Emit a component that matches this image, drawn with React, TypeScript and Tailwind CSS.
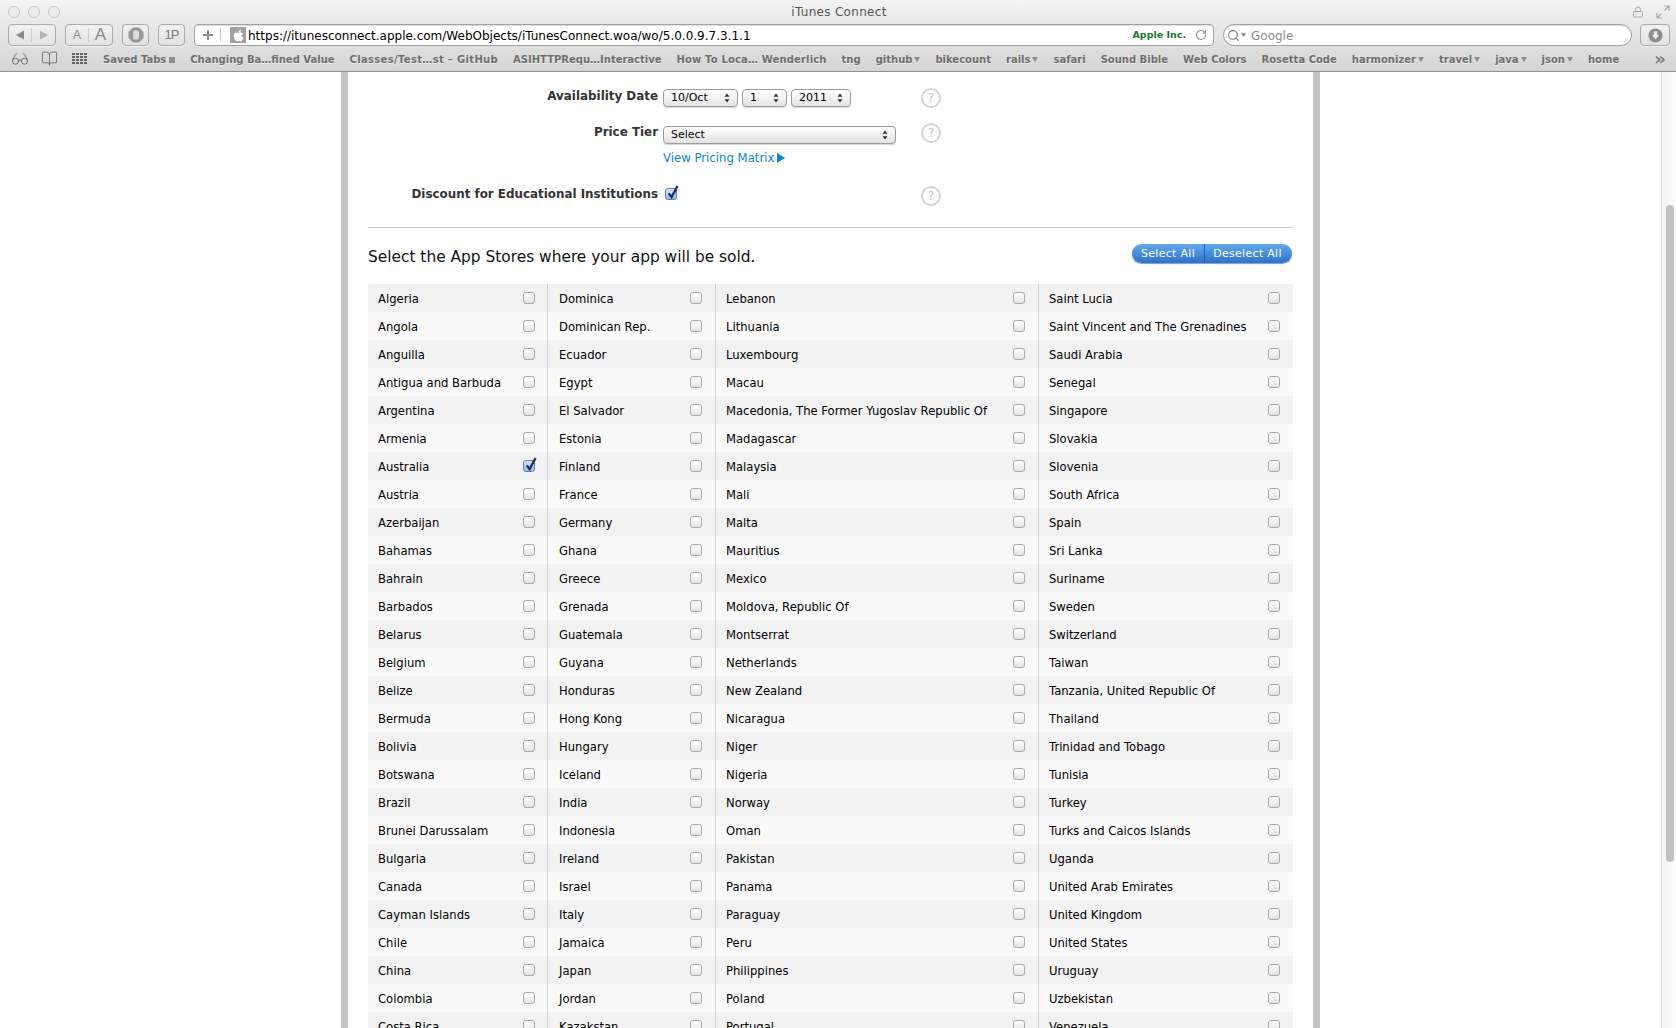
import { BookOpen, Glasses, Lock, RotateCw, Search } from 'lucide-react';
import { FaApple } from 'react-icons/fa';

const columns = [
  ['Algeria', 'Angola', 'Anguilla', 'Antigua and Barbuda', 'Argentina', 'Armenia', 'Australia', 'Austria', 'Azerbaijan', 'Bahamas', 'Bahrain', 'Barbados', 'Belarus', 'Belgium', 'Belize', 'Bermuda', 'Bolivia', 'Botswana', 'Brazil', 'Brunei Darussalam', 'Bulgaria', 'Canada', 'Cayman Islands', 'Chile', 'China', 'Colombia', 'Costa Rica'],
  ['Dominica', 'Dominican Rep.', 'Ecuador', 'Egypt', 'El Salvador', 'Estonia', 'Finland', 'France', 'Germany', 'Ghana', 'Greece', 'Grenada', 'Guatemala', 'Guyana', 'Honduras', 'Hong Kong', 'Hungary', 'Iceland', 'India', 'Indonesia', 'Ireland', 'Israel', 'Italy', 'Jamaica', 'Japan', 'Jordan', 'Kazakstan'],
  ['Lebanon', 'Lithuania', 'Luxembourg', 'Macau', 'Macedonia, The Former Yugoslav Republic Of', 'Madagascar', 'Malaysia', 'Mali', 'Malta', 'Mauritius', 'Mexico', 'Moldova, Republic Of', 'Montserrat', 'Netherlands', 'New Zealand', 'Nicaragua', 'Niger', 'Nigeria', 'Norway', 'Oman', 'Pakistan', 'Panama', 'Paraguay', 'Peru', 'Philippines', 'Poland', 'Portugal'],
  ['Saint Lucia', 'Saint Vincent and The Grenadines', 'Saudi Arabia', 'Senegal', 'Singapore', 'Slovakia', 'Slovenia', 'South Africa', 'Spain', 'Sri Lanka', 'Suriname', 'Sweden', 'Switzerland', 'Taiwan', 'Tanzania, United Republic Of', 'Thailand', 'Trinidad and Tobago', 'Tunisia', 'Turkey', 'Turks and Caicos Islands', 'Uganda', 'United Arab Emirates', 'United Kingdom', 'United States', 'Uruguay', 'Uzbekistan', 'Venezuela'],
];

// width of each cell, the fourth column has no right border
const cellClasses = [
  'w-[180px] pl-[10px] pr-[12px] border-r border-[#d2d2d2]',
  'w-[168px] pl-[11px] pr-[13px] border-r border-[#d2d2d2]',
  'w-[323px] pl-[10px] pr-[13px] border-r border-[#d2d2d2]',
  'w-[254px] pl-[10px] pr-[13px]',
];

const bookmarks = [
  { label: 'Saved Tabs', square: true },
  { label: 'Changing Ba…fined Value' },
  { label: 'Classes/Test…st – GitHub', track: 'tracking-[0.33px]' },
  { label: 'ASIHTTPRequ…Interactive' },
  { label: 'How To Loca… Wenderlich', track: 'tracking-[0.15px]' },
  { label: 'tng' },
  { label: 'github', menu: true },
  { label: 'bikecount' },
  { label: 'rails', menu: true },
  { label: 'safari' },
  { label: 'Sound Bible' },
  { label: 'Web Colors' },
  { label: 'Rosetta Code' },
  { label: 'harmonizer', menu: true },
  { label: 'travel', menu: true },
  { label: 'java', menu: true },
  { label: 'json', menu: true },
  { label: 'home' },
];

const Checkbox = ({ checked = false }: { checked?: boolean }) => (
  <span className={`relative block w-[12px] h-[12px] shrink-0 rounded-[3px] border ${checked ? 'border-[#5f7fb0] bg-gradient-to-b from-[#d6e4f6] to-[#9dbde8]' : 'border-[#a9a9a9] bg-gradient-to-b from-[#ffffff] to-[#e4e4e4]'}`}>
    {checked && (
      <svg viewBox="0 0 14 16" className="absolute left-[0px] top-[-4px] w-[13px] h-[15px]">
        <path d="M3 9 L6 13 L12.5 1" fill="none" stroke="#14305c" strokeWidth="2.4" />
      </svg>
    )}
  </span>
);

const SelectBox = ({ label, className }: { label: string; className: string }) => (
  <div className={`flex items-center justify-between h-[18px] pl-[7px] pr-[7px] rounded-[4px] border border-[#9b9b9b] bg-gradient-to-b from-[#ffffff] to-[#e3e3e3] shadow-[0_1px_0_#d8d8d8] text-[11px] leading-[16px] text-black ${className}`}>
    <span>{label}</span>
    <svg viewBox="0 0 6 10" className="w-[6px] h-[10px]">
      <path d="M3 0.5 L5.5 3.8 H0.5 Z M3 9.5 L5.5 6.2 H0.5 Z" fill="#333" />
    </svg>
  </div>
);

const HelpIcon = ({ className = '' }: { className?: string }) => (
  <span className={`flex items-center justify-center w-[20px] h-[20px] rounded-full border-2 border-[#d4d4d4] text-[12px] leading-none text-[#c4c4c4] ${className}`}>?</span>
);

const ToolButton = ({ children, className = '' }: { children: React.ReactNode; className?: string }) => (
  <div className={`flex items-center justify-center h-[22px] rounded-[4px] border border-[#ababab] bg-gradient-to-b from-[#f2f2f2] to-[#e2e2e2] shadow-[0_1px_0_#f4f4f4] ${className}`}>
    {children}
  </div>
);

const BrowserChrome = () => (
  <header className="shrink-0 h-[72px] border-b border-[#929292] bg-gradient-to-b from-[#f3f3f3] to-[#d5d5d5]">
    {/* title bar */}
    <div className="flex items-center h-[24px] pl-[8px] pr-[6px]">
      <div className="flex gap-[8px] w-[54px]">
        <span className="w-[12px] h-[12px] rounded-full border border-[#c6c6c6] bg-[#ececec]" />
        <span className="w-[12px] h-[12px] rounded-full border border-[#c6c6c6] bg-[#ececec]" />
        <span className="w-[12px] h-[12px] rounded-full border border-[#c6c6c6] bg-[#ececec]" />
      </div>
      <div className="flex-1 text-center text-[12px] tracking-[0.3px] text-[#555]">iTunes Connect</div>
      <div className="flex items-center justify-end w-[54px] gap-[12px]">
        <Lock size={12} strokeWidth={2} className="text-[#a8a8a8]" />
        <svg viewBox="0 0 14 14" className="w-[14px] h-[14px] text-[#a8a8a8]">
          <path d="M8 1 H13 V6 M13 1 L8.5 5.5 M6 13 H1 V8 M1 13 L5.5 8.5" fill="none" stroke="currentColor" strokeWidth="1.2" />
        </svg>
      </div>
    </div>

    {/* navigation row */}
    <div className="flex items-center h-[22px] pl-[8px] pr-[6px]">
      <ToolButton className="w-[48px] divide-x divide-[#cccccc]">
        <span className="flex items-center justify-center w-1/2 h-[14px]">
          <svg viewBox="0 0 10 10" className="w-[10px] h-[10px]"><path d="M1 5 L9 0.5 V9.5 Z" fill="#8a8a8a" /></svg>
        </span>
        <span className="flex items-center justify-center w-1/2 h-[14px]">
          <svg viewBox="0 0 10 10" className="w-[10px] h-[10px]"><path d="M9 5 L1 0.5 V9.5 Z" fill="#b4b4b4" /></svg>
        </span>
      </ToolButton>
      <ToolButton className="w-[48px] ml-[9px] divide-x divide-[#cccccc] text-[#8a8a8a] font-['Liberation_Sans',sans-serif]">
        <span className="flex items-center justify-center w-1/2 h-[14px] text-[12px]">A</span>
        <span className="flex items-center justify-center w-1/2 h-[14px] text-[17px]">A</span>
      </ToolButton>
      <ToolButton className="w-[27px] ml-[9px]">
        <svg viewBox="0 0 16 16" className="w-[16px] h-[16px]">
          <path d="M5 0.5 H11 L15.5 5 V11 L11 15.5 H5 L0.5 11 V5 Z" fill="#999999" />
          <path d="M5.2 12.5 V5 Q5.2 4 6 4 V3.4 Q7 2.6 8 3.4 Q9.2 2.8 10 4 Q11 4 11 5 V10 Q11 12.5 9 12.5 Z" fill="#dddddd" />
        </svg>
      </ToolButton>
      <ToolButton className="w-[27px] ml-[9px] text-[13px] text-[#7a7a7a] font-['Liberation_Sans',sans-serif] tracking-[-1px]">1P</ToolButton>
      <div className="flex items-center w-[1020px] h-[22px] ml-[9px] rounded-[4px] border border-[#a2a2a2] bg-white shadow-[inset_0_1px_1px_#dddddd]">
        <span className="flex items-center justify-center w-[26px] h-[14px] border-r border-[#cfcfcf]">
          <svg viewBox="0 0 12 12" className="w-[12px] h-[12px]"><path d="M6 1 V11 M1 6 H11" stroke="#8d8d8d" strokeWidth="2" /></svg>
        </span>
        <span className="flex items-center justify-center w-[16px] h-[16px] ml-[9px] bg-[#a2a2a2]">
          <FaApple size={13} className="text-white" />
        </span>
        <span className="ml-[2px] pt-[1px] flex-1 text-[12px] leading-[20px] text-black">https://itunesconnect.apple.com/WebObjects/iTunesConnect.woa/wo/5.0.0.9.7.3.1.1</span>
        <span className="text-[9.5px] font-bold text-[#1b7a2b]">Apple Inc.</span>
        <RotateCw size={12} strokeWidth={2.4} className="ml-[9px] mr-[6px] text-[#8f8f8f]" />
      </div>
      <div className="flex items-center w-[409px] h-[22px] ml-[9px] pl-[3px] rounded-full border border-[#a2a2a2] bg-white shadow-[inset_0_1px_1px_#dddddd]">
        <Search size={13} strokeWidth={2} className="text-[#7d7d7d]" />
        <svg viewBox="0 0 6 4" className="w-[5px] h-[4px] ml-[1px]"><path d="M0 0 H6 L3 4 Z" fill="#7d7d7d" /></svg>
        <span className="ml-[5px] pt-[1px] text-[12px] text-[#8a8a8a]">Google</span>
      </div>
      <ToolButton className="w-[30px] ml-[8px]">
        <svg viewBox="0 0 16 16" className="w-[15px] h-[15px]">
          <circle cx="8" cy="8" r="7.5" fill="#8d8d8d" />
          <path d="M6.2 3.5 H9.8 V7.5 H12 L8 12 L4 7.5 H6.2 Z" fill="#ededed" />
        </svg>
      </ToolButton>
    </div>

    {/* bookmarks bar */}
    <div className="flex items-center h-[25px] pl-[11px] pr-[10px] text-[#6e6e6e]">
      <Glasses size={18} strokeWidth={1.2} className="text-[#666]" />
      <BookOpen size={17} strokeWidth={1.2} className="ml-[12px] text-[#666]" />
      <svg viewBox="0 0 15 11" className="ml-[14px] w-[15px] h-[11px] text-[#666]">
        <path d="M0 0h3v2H0zM4 0h3v2H4zM8 0h3v2H8zM12 0h3v2h-3zM0 3h3v2H0zM4 3h3v2H4zM8 3h3v2H8zM12 3h3v2h-3zM0 6h3v2H0zM4 6h3v2H4zM8 6h3v2H8zM12 6h3v2h-3zM0 9h3v2H0zM4 9h3v2H4zM8 9h3v2H8zM12 9h3v2h-3z" fill="currentColor" />
      </svg>
      <div className="flex flex-1 items-center gap-[15px] ml-[16px] pt-[2px] text-[10px] font-bold whitespace-nowrap [text-shadow:0_1px_0_#eeeeee]">
        {bookmarks.map((b) => (
          <span key={b.label} className={`flex items-center gap-[2px] ${b.track ?? ''}`}>
            {b.label}
            {b.square && <span className="w-[6px] h-[6px] ml-[1px] bg-[#8d8d8d]" />}
            {b.menu && (
              <svg viewBox="0 0 6 5" className="w-[6px] h-[5px]"><path d="M0 0 H6 L3 5 Z" fill="#8d8d8d" /></svg>
            )}
          </span>
        ))}
      </div>
      <span className="text-[18px] font-bold leading-none text-[#777]">»</span>
    </div>
  </header>
);

const FormSection = () => (
  <>
    <div className="flex items-start">
      <label className="w-[290px] text-right text-[11.9px] leading-[14px] font-bold text-[#333]">Availability Date</label>
      <div className="flex gap-[4px] w-[258px] ml-[5px]">
        <SelectBox label="10/Oct" className="w-[75px]" />
        <SelectBox label="1" className="w-[45px]" />
        <SelectBox label="2011" className="w-[60px]" />
      </div>
      <HelpIcon className="-mt-px" />
    </div>
    <div className="flex items-start mt-[18px]">
      <label className="w-[290px] -mt-px text-right text-[11.9px] leading-[14px] font-bold text-[#333]">Price Tier</label>
      <div className="w-[258px] ml-[5px]">
        <SelectBox label="Select" className="w-[233px]" />
        <a className="flex items-center gap-[3px] mt-[7px] text-[11.7px] leading-[14px] text-[#0b84cc]">
          View Pricing Matrix
          <svg viewBox="0 0 8 10" className="w-[8px] h-[10px]"><path d="M0 0 L8 5 L0 10 Z" fill="#0b84cc" /></svg>
        </a>
      </div>
      <HelpIcon className="-mt-[3px]" />
    </div>
    <div className="flex items-start mt-[22px]">
      <label className="w-[290px] text-right text-[11.9px] leading-[14px] font-bold text-[#333]">Discount for Educational Institutions</label>
      <div className="w-[258px] ml-[7px] mt-[1px] -mr-[2px]">
        <Checkbox checked />
      </div>
      <HelpIcon className="-mt-px" />
    </div>
    <div className="mt-[21px] border-t border-[#cccccc]" />
  </>
);

const StoresTable = () => (
  <div className="mt-[20px] rounded-t-[3px] overflow-hidden text-[11.6px] text-black">
    {columns[0].map((_, row) => (
      <div key={row} className={`flex h-[28px] ${row % 2 === 0 ? 'bg-[#f2f2f2]' : 'bg-[#fafafa]'}`}>
        {columns.map((col, c) => (
          <div key={c} className={`flex items-center justify-between shrink-0 ${cellClasses[c]}`}>
            <span className="mt-[4px] whitespace-nowrap">{col[row]}</span>
            <Checkbox checked={col[row] === 'Australia'} />
          </div>
        ))}
      </div>
    ))}
  </div>
);

const App = () => {
  return (
    <div className="flex flex-col w-[1676px] h-[1028px] overflow-hidden bg-white font-['DejaVu_Sans',sans-serif]">
      <BrowserChrome />
      <div className="flex flex-1 min-h-0">
        <main className="flex-1 min-w-0 overflow-hidden">
          <div className="w-[979px] mx-auto pt-[17px] px-[20px] border-x-[7px] border-[#c4c4c4]">
            <FormSection />
            <div className="flex items-start justify-between h-[20px] mt-[16px]">
              <h2 className="pt-[3px] text-[15.4px] leading-[20px] text-[#111]">Select the App Stores where your app will be sold.</h2>
              <div className="flex h-[19px] mr-[1px] rounded-full bg-gradient-to-b from-[#62a9ee] to-[#2b72ca] shadow-[0_1px_1px_#7d9cc4] text-[11px] leading-[19px] tracking-[0.3px] text-white">
                <button className="w-[73px] text-center border-r border-[#1f5fb0]">Select All</button>
                <button className="w-[87px] pr-[2px] text-center">Deselect All</button>
              </div>
            </div>
            <StoresTable />
          </div>
        </main>
        {/* page scrollbar */}
        <aside className="w-[15px] pt-[133px] pl-[4px] border-l border-[#e6e6e6] bg-gradient-to-r from-[#f4f4f4] to-[#fcfcfc]">
          <div className="w-[8px] h-[657px] rounded-full bg-[#c2c2c2]" />
        </aside>
      </div>
    </div>
  );
};

export default App;
